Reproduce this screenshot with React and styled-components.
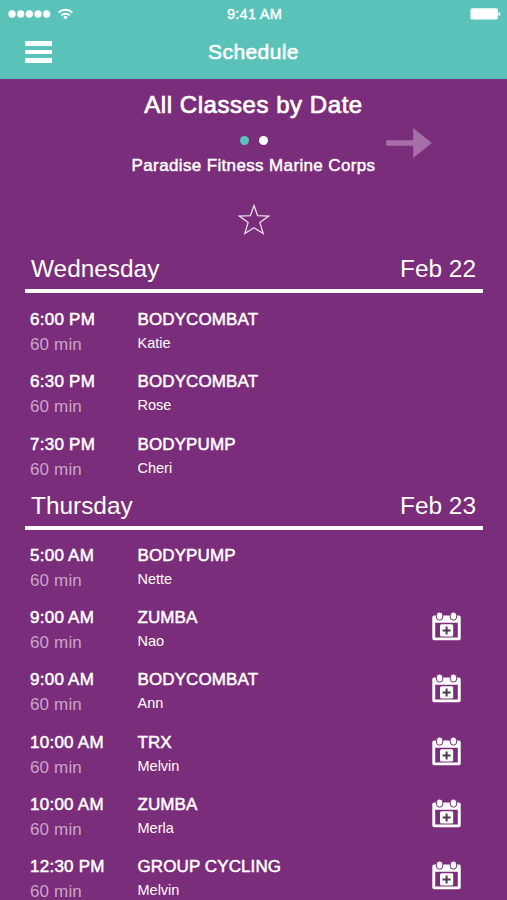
import React from 'react';
import styled, {createGlobalStyle} from 'styled-components';

const GlobalStyle = createGlobalStyle`
  * {
    box-sizing: border-box;
  }

  body {
    margin: 0;
    background-color: #7a2d7a;
  }
`;

const Screen = styled.div`
  display: flex;
  flex-direction: column;
  width: 507px;
  height: 900px;
  overflow: hidden;
  background-color: #7a2d7a;
  color: #fff;
  font-family: 'Liberation Sans', Arial, sans-serif;
`;

const Header = styled.header`
  flex: none;
  height: 79px;
  background-color: #5bc2ba;
`;

const StatusBar = styled.div`
  display: grid;
  grid-template-columns: 1fr auto 1fr;
  align-items: center;
  height: 28px;
  padding: 0 6px 0 8px;
`;

const Signal = styled.div`
  display: flex;
  align-items: center;
  gap: 7px;
`;

const Clock = styled.span`
  font-size: 14.5px;
  letter-spacing: 0.25px;
  -webkit-text-stroke: 0.4px #fff;
`;

const Battery = styled.svg`
  justify-self: end;
`;

const NavBar = styled.div`
  display: grid;
  grid-template-columns: 1fr auto 1fr;
  align-items: center;
  height: 48px;
  padding: 0 25px;
`;

const MenuButton = styled.button`
  display: flex;
  flex-direction: column;
  gap: 4px;
  width: 27px;
  padding: 0;
  border: none;
  background: none;
  cursor: pointer;
`;

const MenuLine = styled.span`
  width: 27px;
  height: 4.6px;
  background-color: #fff;
`;

const NavTitle = styled.h1`
  margin: 0;
  font-size: 21px;
  font-weight: normal;
  letter-spacing: 0.4px;
  -webkit-text-stroke: 0.6px #fff;
`;

const Intro = styled.section`
  display: flex;
  flex: none;
  flex-direction: column;
  align-items: center;
  height: 167px;
  padding-top: 11px;
`;

const Title = styled.h2`
  margin: 0;
  font-size: 24px;
  font-weight: normal;
  line-height: 30px;
  letter-spacing: 0.55px;
  -webkit-text-stroke: 0.7px #fff;
`;

const Pager = styled.div`
  display: grid;
  grid-template-columns: 1fr auto 1fr;
  align-items: center;
  width: 100%;
  height: 34px;
  margin-top: 6px;
`;

const Dots = styled.div`
  display: flex;
  grid-column: 2;
  gap: 10px;
  padding-bottom: 5px;
`;

const Dot = styled.span`
  width: 9px;
  height: 9px;
  border-radius: 50%;
  background-color: ${({$active}) => ($active ? '#5bc2ba' : '#fff')};
`;

const NextArrow = styled.svg`
  justify-self: end;
  margin-right: 74px;
`;

const Club = styled.p`
  margin: -4px 0 0;
  font-size: 17px;
  line-height: 20px;
  letter-spacing: 0.36px;
  -webkit-text-stroke: 0.45px #fff;
`;

const Star = styled.svg`
  margin-top: 28px;
`;

const DayHeading = styled.div`
  display: flex;
  flex: none;
  justify-content: space-between;
  height: 47px;
  margin: 0 24px 0 25px;
  padding: 8px 7px 0 6px;
  border-bottom: 4px solid #fff;
  font-size: 24.4px;
  line-height: 30px;
`;

const ClassList = styled.div`
  flex: none;
  padding: ${({$first}) => ($first ? '1.5px 0 1.6px' : '0.4px 0 0')};
`;

const ClassRow = styled.div`
  display: grid;
  grid-template-columns: 107.5px 1fr auto;
  height: 62.3px;
  padding: 15.5px 45px 0 30px;
`;

const Strong = styled.div`
  font-size: 17px;
  line-height: 20px;
  letter-spacing: ${({$time}) => ($time ? '0.25px' : '0.1px')};
  white-space: nowrap;
  -webkit-text-stroke: 0.5px #fff;
`;

const Duration = styled.div`
  margin-top: 5px;
  color: #c9a4ca;
  font-size: 17px;
  line-height: 20px;
  letter-spacing: 0.15px;
`;

const Instructor = styled.div`
  margin-top: 3px;
  font-size: 14.5px;
  line-height: 20px;
`;

const CalendarIcon = styled.svg`
  margin-top: 4px;
`;

const days = [
    {
        day: 'Wednesday',
        date: 'Feb 22',
        classes: [
            {time: '6:00 PM', name: 'BODYCOMBAT', instructor: 'Katie'},
            {time: '6:30 PM', name: 'BODYCOMBAT', instructor: 'Rose'},
            {time: '7:30 PM', name: 'BODYPUMP', instructor: 'Cheri'},
        ],
    },
    {
        day: 'Thursday',
        date: 'Feb 23',
        classes: [
            {time: '5:00 AM', name: 'BODYPUMP', instructor: 'Nette'},
            {time: '9:00 AM', name: 'ZUMBA', instructor: 'Nao', canAdd: true},
            {time: '9:00 AM', name: 'BODYCOMBAT', instructor: 'Ann', canAdd: true},
            {time: '10:00 AM', name: 'TRX', instructor: 'Melvin', canAdd: true},
            {time: '10:00 AM', name: 'ZUMBA', instructor: 'Merla', canAdd: true},
            {time: '12:30 PM', name: 'GROUP CYCLING', instructor: 'Melvin', canAdd: true},
        ],
    },
];

const AddToCalendar = () => (
    <CalendarIcon width="30" height="29" viewBox="0 0 30 29">
        <path fill="#fff" fillRule="evenodd"
              d="M2 3.5h25a1.7 1.7 0 0 1 1.7 1.7v21.3a1.7 1.7 0 0 1-1.7 1.7h-25a1.7 1.7 0 0 1-1.7-1.7v-21.3a1.7 1.7 0 0 1 1.7-1.7zM3.2 10.8v14.6h22.6V10.8z"/>
        <rect x="4.4" y="0" width="6.4" height="8.2" rx="3.2" fill="#fff" stroke="#7a2d7a" strokeWidth="1"/>
        <rect x="18.2" y="0" width="6.4" height="8.2" rx="3.2" fill="#fff" stroke="#7a2d7a" strokeWidth="1"/>
        <rect x="8" y="12.2" width="13.2" height="12.4" rx="1.5" fill="#fff"/>
        <path d="M14.6 14.6v8M10.6 18.6h8" stroke="#4b3a50" strokeWidth="2"/>
    </CalendarIcon>
);

const App = () => {
    return (
        <Screen>
            <GlobalStyle/>
            <Header>
                <StatusBar>
                    <Signal>
                        <svg width="43" height="8" viewBox="0 0 43 8" fill="#fff">
                            {[4, 12.7, 21.3, 30, 38.6].map((cx) => <circle key={cx} cx={cx} cy="4" r="3.7"/>)}
                        </svg>
                        <svg width="15" height="12" viewBox="0 0 15 12" fill="none" stroke="#fff" strokeWidth="2">
                            <path d="M0.7 4.5a9.8 9.8 0 0 1 13.6 0"/>
                            <path d="M3.3 7.4a6 6 0 0 1 8.4 0"/>
                            <path d="M7.5 11.5 5.2 9.2a3.3 3.3 0 0 1 4.6 0z" fill="#fff" stroke="none"/>
                        </svg>
                    </Signal>
                    <Clock>9:41 AM</Clock>
                    <Battery width="31" height="12" viewBox="0 0 31 12" fill="#fff">
                        <rect x="0.5" y="0.3" width="27.3" height="11.2" rx="1.5"/>
                        <path d="M28.5 4a2 2 0 0 1 0 4z"/>
                    </Battery>
                </StatusBar>
                <NavBar>
                    <MenuButton>
                        <MenuLine/>
                        <MenuLine/>
                        <MenuLine/>
                    </MenuButton>
                    <NavTitle>Schedule</NavTitle>
                </NavBar>
            </Header>
            <Intro>
                <Title>All Classes by Date</Title>
                <Pager>
                    <Dots>
                        <Dot $active/>
                        <Dot/>
                    </Dots>
                    <NextArrow width="47" height="32" viewBox="0 0 47 32">
                        <path d="M0.2 13.2h27V1l18.6 15-18.6 15V18.8h-27z" fill="#a66fa7"/>
                    </NextArrow>
                </Pager>
                <Club>Paradise Fitness Marine Corps</Club>
                <Star width="32" height="31" viewBox="0 0 32 31" fill="none" stroke="#ecdcec" strokeWidth="1.3">
                    <path d="M16 1.5 19.6 11.7 30.8 12 21.9 18.6 25.2 29.5 16 23.8 6.8 29.5 10.1 18.6 1.2 12 12.4 11.7z"/>
                </Star>
            </Intro>
            {days.map(({day, date, classes}, index) => (
                <React.Fragment key={day}>
                    <DayHeading>
                        <span>{day}</span>
                        <span>{date}</span>
                    </DayHeading>
                    <ClassList $first={index === 0}>
                        {classes.map((item) => (
                            <ClassRow key={item.time + item.name}>
                                <div>
                                    <Strong $time>{item.time}</Strong>
                                    <Duration>60 min</Duration>
                                </div>
                                <div>
                                    <Strong>{item.name}</Strong>
                                    <Instructor>{item.instructor}</Instructor>
                                </div>
                                {item.canAdd && <AddToCalendar/>}
                            </ClassRow>
                        ))}
                    </ClassList>
                </React.Fragment>
            ))}
        </Screen>
    );
};

export default App;
